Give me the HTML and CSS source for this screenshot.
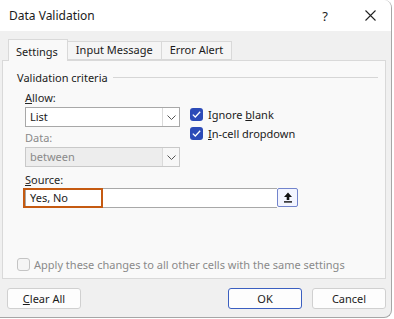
FILE: index.html
```html
<!DOCTYPE html>
<html lang="en">
<head>
    <meta charset="UTF-8">
    <title>Data Validation</title>
    <link rel="stylesheet" href="styles.css">
</head>
<body>
    <div class="window">
        <div class="titlebar">
            <span class="title">Data Validation</span>
            <span class="help">?</span>
            <span class="close">
                <svg width="11" height="11" viewBox="0 0 11 11"><path d="M0.5 0.5 L10.5 10.5 M10.5 0.5 L0.5 10.5" stroke="#222" stroke-width="1.1" fill="none"/></svg>
            </span>
        </div>
        <div class="content">
            <div class="tabs">
                <div class="tab active">Settings</div>
                <div class="tab">Input Message</div>
                <div class="tab">Error Alert</div>
            </div>
            <div class="panel">
                <div class="group-title">
                    <span>Validation criteria</span>
                    <span class="rule"></span>
                </div>
                <div class="criteria">
                    <div class="fields">
                        <div class="label"><u>A</u>llow:</div>
                        <div class="select">
                            <span class="value">List</span>
                            <span class="drop"><svg width="9" height="5" viewBox="0 0 9 5"><path d="M0.5 0.5 L4.5 4.5 L8.5 0.5" stroke="#555" fill="none"/></svg></span>
                        </div>
                        <div class="label muted spaced">Data:</div>
                        <div class="select disabled">
                            <span class="value">between</span>
                            <span class="drop"><svg width="9" height="5" viewBox="0 0 9 5"><path d="M0.5 0.5 L4.5 4.5 L8.5 0.5" stroke="#555" fill="none"/></svg></span>
                        </div>
                    </div>
                    <div class="checks">
                        <div class="check-row">
                            <span class="box checked"><svg width="9" height="7" viewBox="0 0 9 7"><path d="M0.8 3.6 L3.3 6 L8.2 0.8" stroke="#fff" stroke-width="1.3" fill="none"/></svg></span>
                            <span>Ignore <u>b</u>lank</span>
                        </div>
                        <div class="check-row">
                            <span class="box checked"><svg width="9" height="7" viewBox="0 0 9 7"><path d="M0.8 3.6 L3.3 6 L8.2 0.8" stroke="#fff" stroke-width="1.3" fill="none"/></svg></span>
                            <span><u>I</u>n-cell dropdown</span>
                        </div>
                    </div>
                </div>
                <div class="label source-label"><u>S</u>ource:</div>
                <div class="source">
                    <div class="source-input">Yes, No</div>
                    <div class="collapse-btn">
                        <svg width="10" height="11" viewBox="0 0 10 11"><path d="M5 0.5 L9 5 L6.3 5 L6.3 8 L3.7 8 L3.7 5 L1 5 Z" fill="#111"/><rect x="1" y="9.2" width="8" height="1.4" fill="#111"/></svg>
                    </div>
                    <div class="highlight"></div>
                </div>
                <div class="apply">
                    <span class="box"></span>
                    <span>Apply these changes to all other cells with the same settings</span>
                </div>
            </div>
            <div class="buttons">
                <div class="btn"><u>C</u>lear All</div>
                <div class="spacer"></div>
                <div class="btn default">OK</div>
                <div class="btn">Cancel</div>
            </div>
        </div>
    </div>
</body>
</html>
```

FILE: styles.css
```css
html, body {
    margin: 0;
    padding: 0;
    background: #ffffff;
}
body {
    font-family: "Noto Sans", "Open Sans", sans-serif;
    font-size: 11px;
    color: #1b1b1b;
    overflow: hidden;
}
.window {
    width: 392px;
    height: 318px;
    box-sizing: border-box;
    border: 1px solid #a6a6a6;
    border-left: 0;
    border-top: 0;
    border-radius: 0 8px 8px 0;
    background: #f0f0f0;
    overflow: hidden;
}
.titlebar {
    height: 31px;
    background: #ffffff;
    display: flex;
    align-items: center;
}
.title {
    margin-left: 9px;
    font-size: 12px;
    flex: 1;
}
.help {
    font-size: 13px;
    width: 16px;
    margin-right: 32px;
    text-align: center;
}
.close {
    display: flex;
    margin-right: 15px;
}
.content {
    padding: 0 5px 0 2px;
}
.tabs {
    display: flex;
    align-items: flex-end;
    margin: 8px 0 -1px 6px;
    position: relative;
    z-index: 1;
}
.tab {
    height: 17px;
    line-height: 16px;
    padding: 0 8px;
    border: 1px solid #d9d9d9;
    border-left: 0;
    background: #f5f5f5;
    margin-bottom: 1px;
}
.tab.active {
    height: 21px;
    line-height: 23px;
    background: #f9f9f9;
    border-left: 1px solid #d9d9d9;
    border-bottom: 0;
    margin-bottom: 0;
    padding: 0 9px 0 7px;
}
.panel {
    border: 1px solid #d9d9d9;
    background: #f9f9f9;
    padding: 8px 7px 6px 14px;
}
.group-title {
    display: flex;
    align-items: center;
    height: 16px;
}
.rule {
    flex: 1;
    height: 1px;
    background: #d6d6d6;
    margin-left: 5px;
}
.criteria {
    display: flex;
    margin: 5px 0 0 8px;
}
.fields {
    width: 155px;
}
.label {
    height: 16px;
    line-height: 16px;
    margin-bottom: 1px;
    color: #262626;
}
.label.muted {
    color: #8a8a8a;
}
.label.spaced {
    margin-top: 3px;
}
.select {
    height: 20px;
    box-sizing: border-box;
    border: 1px solid #a8a8a8;
    background: #ffffff;
    display: flex;
}
.select .value {
    flex: 1;
    line-height: 18px;
    padding-left: 4px;
}
.select .drop {
    width: 16px;
    border-left: 1px solid #dadada;
    display: flex;
    align-items: center;
    justify-content: center;
}
.select.disabled {
    background: #ededed;
    border-color: #c9c9c9;
}
.select.disabled .value {
    color: #8a8a8a;
}
.select.disabled .drop {
    background: #f7f7f7;
}
.checks {
    margin: 15px 0 0 10px;
}
.check-row {
    height: 19px;
    display: flex;
    align-items: center;
}
.box {
    width: 13px;
    height: 13px;
    box-sizing: border-box;
    border-radius: 3px;
    margin-right: 5px;
    display: flex;
    align-items: center;
    justify-content: center;
}
.box.checked {
    background: #2c4bb8;
}
.source-label {
    margin: 5px 0 0 8px;
}
.source {
    position: relative;
    display: flex;
    margin-left: 8px;
    width: 273px;
}
.source-input {
    flex: 1;
    height: 20px;
    box-sizing: border-box;
    border: 1px solid #a8a8a8;
    border-right: 0;
    background: #ffffff;
    line-height: 18px;
    padding-left: 4px;
}
.collapse-btn {
    width: 21px;
    height: 19px;
    box-sizing: border-box;
    border: 1px solid #7284cc;
    border-radius: 2px;
    background: #f3f5ff;
    display: flex;
    align-items: center;
    justify-content: center;
}
.highlight {
    position: absolute;
    left: -2px;
    top: 0;
    width: 80px;
    height: 20px;
    box-sizing: border-box;
    border: 2px solid #c55a11;
}
.apply {
    display: flex;
    align-items: center;
    height: 16px;
    margin-top: 48px;
    color: #8a8a8a;
}
.apply .box {
    border: 1px solid #c4c4c4;
    background: #f5f5f5;
    margin-right: 4px;
}
.buttons {
    display: flex;
    margin-top: 9px;
    padding-left: 5px;
}
.spacer {
    flex: 1;
}
.btn {
    width: 74px;
    height: 21px;
    box-sizing: border-box;
    border: 1px solid #d0d0d0;
    border-radius: 3px;
    background: #fdfdfd;
    text-align: center;
    line-height: 19px;
}
.btn.default {
    border-color: #3b5fc0;
    margin-right: 10px;
}
```
